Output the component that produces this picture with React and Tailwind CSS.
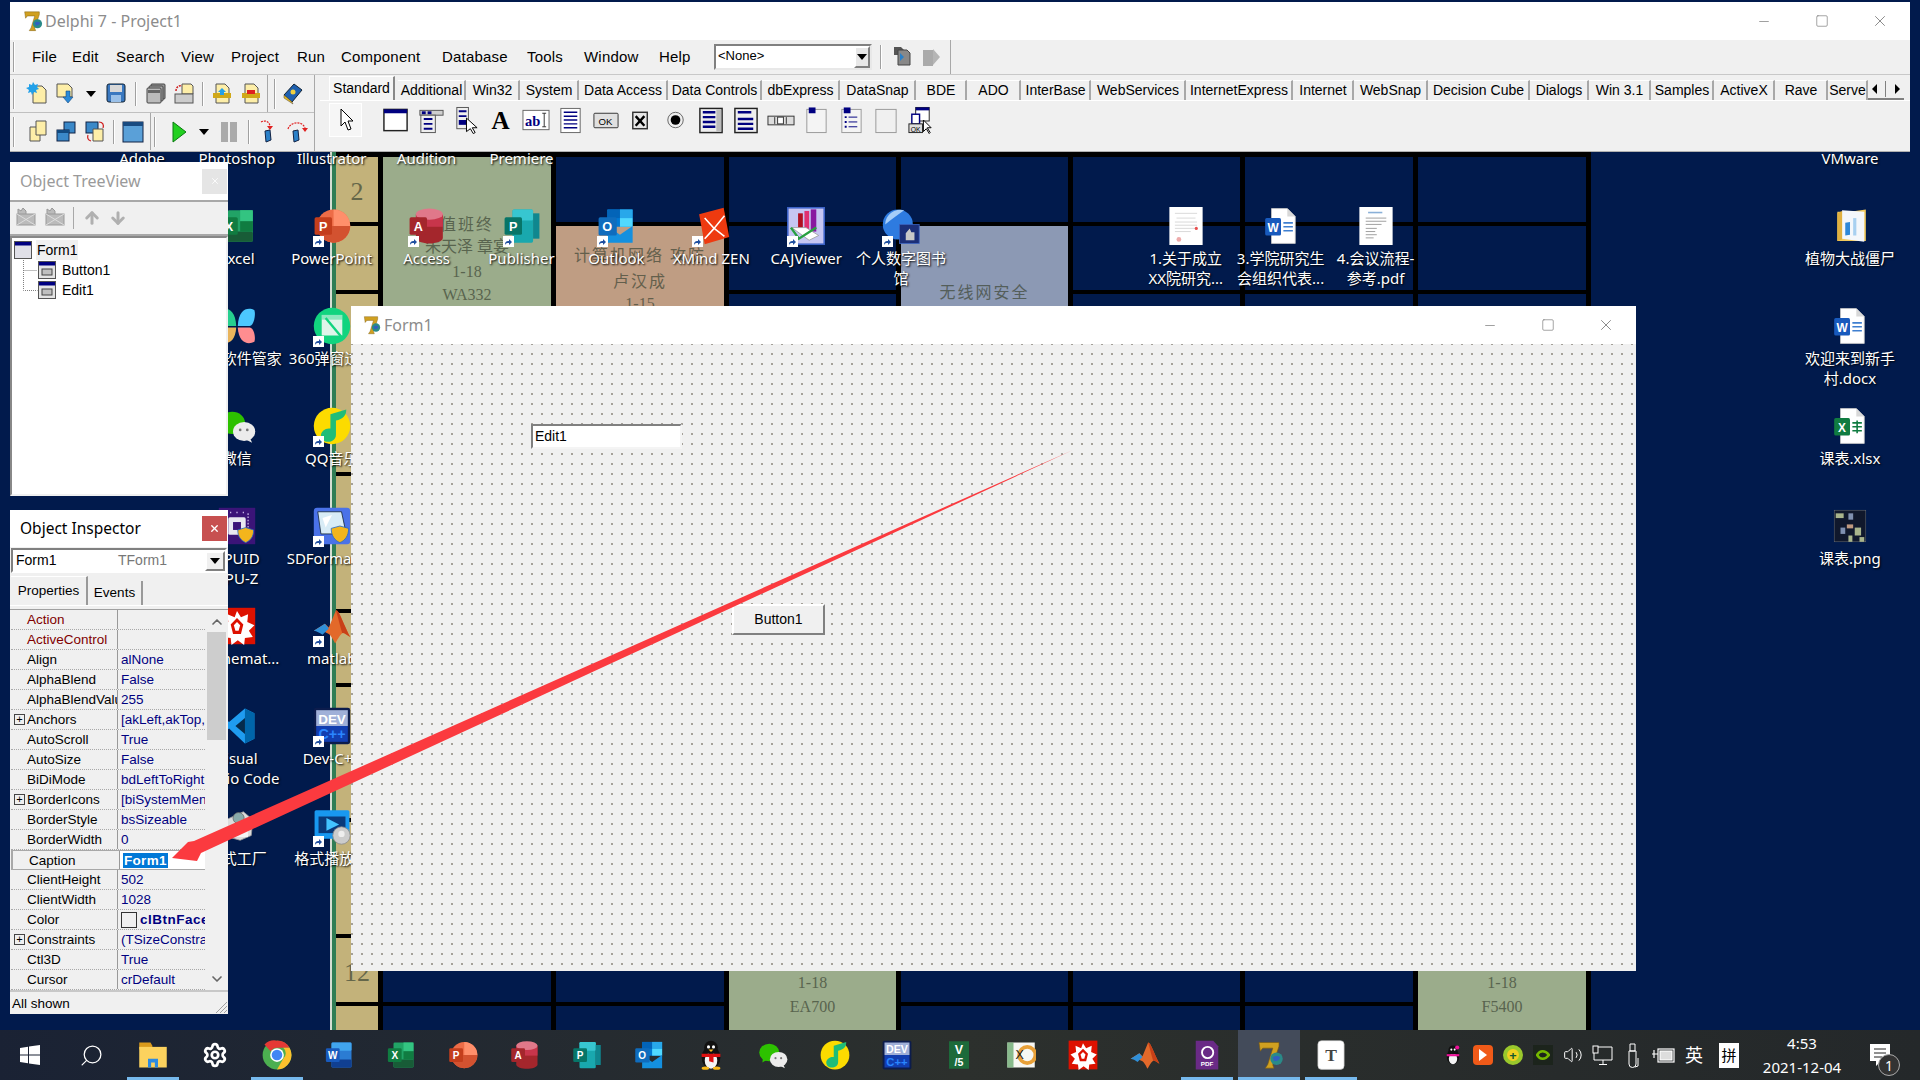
import React from "react";
import { Search, Settings, Volume2, ChevronUp, ChevronDown, X, Minus, Square, ArrowUp, ArrowDown } from "lucide-react";

const sansCjk = { fontFamily: '"Noto Sans", "Noto Sans CJK SC", sans-serif' };

// small helper for letters that sit on app tiles
const Letter = ({ x, y, size = 16, fill = "#fff", children, weight = 700 }) => (
  <text x={x} y={y} fontSize={size} fontWeight={weight} fill={fill} textAnchor="middle" fontFamily="Liberation Sans, sans-serif">
    {children}
  </text>
);

const Page = () => (
  <>
    <path d="M12 2h20l10 10v34H12z" fill="#fff" stroke="#c8c8c8" />
    <path d="M32 2v10h10z" fill="#d8d8d8" />
  </>
);

const art = {
  word: (
    <>
      <rect x="12" y="4" width="32" height="40" rx="2" fill="#2b7cd3" />
      <rect x="12" y="4" width="32" height="13" rx="2" fill="#41a5ee" />
      <rect x="12" y="31" width="32" height="13" rx="2" fill="#103f91" />
      <rect x="3" y="13" width="22" height="22" rx="2" fill="#185abd" />
      <Letter x={14} y={30}>W</Letter>
    </>
  ),
  excel: (
    <>
      <rect x="12" y="4" width="32" height="40" rx="2" fill="#21a366" />
      <rect x="28" y="4" width="16" height="14" fill="#33c481" />
      <rect x="12" y="31" width="32" height="13" rx="2" fill="#185c37" />
      <rect x="28" y="18" width="16" height="13" fill="#107c41" />
      <rect x="3" y="13" width="22" height="22" rx="2" fill="#107c41" />
      <Letter x={14} y={30}>X</Letter>
    </>
  ),
  ppt: (
    <>
      <circle cx="26" cy="24" r="21" fill="#ed6c47" />
      <path d="M26 3a21 21 0 0 1 21 21H26z" fill="#ff8f6b" />
      <path d="M5 24h42a21 21 0 0 1-42 0z" fill="#d35230" />
      <rect x="2" y="13" width="22" height="22" rx="2" fill="#c43e1c" />
      <Letter x={13} y={30}>P</Letter>
    </>
  ),
  access: (
    <>
      <path d="M10 9v30c0 4 9 7 17 7s17-3 17-7V9z" fill="#a4262c" />
      <path d="M10 9v16h34V9z" fill="#c8354b" />
      <ellipse cx="27" cy="9" rx="17" ry="7" fill="#e0788a" />
      <rect x="2" y="13" width="22" height="22" rx="2" fill="#a4262c" />
      <Letter x={13} y={30}>A</Letter>
    </>
  ),
  publisher: (
    <>
      <rect x="12" y="3" width="26" height="42" rx="2" fill="#19a8ae" />
      <rect x="12" y="3" width="26" height="14" rx="2" fill="#37c6d0" />
      <rect x="38" y="8" width="8" height="32" fill="#0f878f" />
      <rect x="2" y="13" width="22" height="22" rx="2" fill="#077568" />
      <Letter x={13} y={30}>P</Letter>
    </>
  ),
  outlook: (
    <>
      <rect x="13" y="3" width="32" height="22" rx="1" fill="#0078d4" />
      <rect x="13" y="3" width="16" height="11" fill="#0364b8" />
      <rect x="29" y="3" width="16" height="11" fill="#28a8ea" />
      <rect x="29" y="14" width="16" height="11" fill="#50d9ff" />
      <path d="M13 24l16 11 16-11v21H13z" fill="#1490df" />
      <rect x="2" y="13" width="23" height="23" rx="2" fill="#0f6cbd" />
      <Letter x={13} y={30}>O</Letter>
    </>
  ),
  xmind: (
    <>
      <path d="M9 9l31-8 7 37-31 9z" fill="#ee3a10" />
      <path d="M16 14l12 13-12 13M41 11L28 27l13 10" fill="none" stroke="#fff" strokeWidth="2" />
    </>
  ),
  caj: (
    <>
      <rect x="1" y="1" width="46" height="46" fill="#c6c6f2" stroke="#3c62c6" strokeWidth="2" />
      <rect x="14" y="8" width="6" height="22" fill="#b01020" />
      <rect x="22" y="5" width="6" height="26" fill="#e03070" />
      <rect x="30" y="3" width="7" height="28" fill="#8818a0" />
      <path d="M6 26l18 0 16 10-12 6z" fill="#fff" stroke="#999" />
      <path d="M5 26l10 14 22-14" fill="none" stroke="#28a040" strokeWidth="3" />
    </>
  ),
  library: (
    <>
      <circle cx="20" cy="22" r="19" fill="#2e7be0" />
      <path d="M4 22a19 19 0 0 1 24-18c-6 4-14 10-24 18z" fill="#a5cdf8" />
      <rect x="22" y="22" width="25" height="24" fill="#1c2f78" stroke="#3a62c0" />
      <path d="M30 42v-9l5-6 2 5 4 0v10z" fill="#c8c8c8" />
    </>
  ),
  pdfdoc: (
    <>
      <rect x="3" width="42" height="48" fill="#fff" />
      <path d="M10 8h28M12 14h24M10 19h28M10 23h28M10 27h26M10 31h20" stroke="#d0d0d0" strokeWidth="1" />
      <circle cx="37" cy="27" r="2" fill="#e85050" />
      <circle cx="15" cy="41" r="3" fill="#eaa" />
    </>
  ),
  pdfdoc2: (
    <>
      <rect x="3" width="42" height="48" fill="#fff" />
      <path d="M14 7h18" stroke="#8ab0d8" strokeWidth="2" />
      <path d="M11 14h26M11 18h26M11 22h20M11 27h14M11 31h12M11 35h14M11 39h10" stroke="#888" strokeWidth="1" />
    </>
  ),
  worddoc: (
    <>
      <Page />
      <rect x="4" y="14" width="20" height="22" rx="2" fill="#185abd" />
      <Letter x={14} y={31} size={15}>W</Letter>
      <path d="M27 20h12M27 25h12M27 30h12" stroke="#3f7fd0" strokeWidth="2" />
    </>
  ),
  exceldoc: (
    <>
      <Page />
      <rect x="4" y="14" width="20" height="22" rx="2" fill="#107c41" />
      <Letter x={14} y={31} size={15}>X</Letter>
      <path d="M27 20h12M27 25h12M27 30h12M33 17v16" stroke="#107c41" strokeWidth="2" />
    </>
  ),
  folder: (
    <>
      <path d="M8 6h16l20-3v40H8z" fill="#f1c95c" />
      <path d="M14 4l28 2v38l-28-4z" fill="#f4f7fb" />
      <path d="M18 20l6-1v16l-6 1z" fill="#2f88d8" />
      <rect x="28" y="14" width="4" height="22" fill="#a8d0f0" />
      <path d="M8 43V8l6-3v36z" fill="#e0b040" />
    </>
  ),
  png: (
    <>
      <rect x="4" y="4" width="40" height="40" fill="#10182c" stroke="#888" strokeWidth="0.5" />
      <rect x="6" y="8" width="10" height="6" fill="#a8b48c" />
      <rect x="22" y="8" width="6" height="8" fill="#7f90b0" />
      <rect x="20" y="22" width="8" height="5" fill="#c09a80" />
      <rect x="12" y="26" width="6" height="8" fill="#7f90b0" />
      <rect x="30" y="26" width="8" height="10" fill="#a8b48c" />
      <rect x="22" y="36" width="5" height="8" fill="#a8b48c" />
      <rect x="36" y="38" width="6" height="6" fill="#a8b48c" />
    </>
  ),
  guanjia: (
    <>
      <path d="M2 4c8-4 20-2 21 20H8C3 24 0 10 2 4z" fill="#27cf8f" />
      <path d="M46 4c-8-4-20-2-21 20h15c5 0 8-14 6-20z" fill="#4cc8ff" />
      <path d="M2 44c8 4 20 2 21-18H8C3 26 0 38 2 44z" fill="#e9b45c" />
      <path d="M46 44c-8 4-20 2-21-18h15c5 0 8 12 6 18z" fill="#ff8d90" />
    </>
  ),
  w360: (
    <>
      <circle cx="24" cy="24" r="23" fill="#11d47f" />
      <rect x="11" y="10" width="26" height="26" fill="#dff5ea" />
      <rect x="11" y="10" width="26" height="6" fill="#11d47f" opacity=".4" />
      <path d="M16 14l20 24" stroke="#11d47f" strokeWidth="3" />
    </>
  ),
  wechat: (
    <>
      <ellipse cx="18" cy="20" rx="16" ry="14" fill="#2dc100" />
      <path d="M8 28l-1 8 8-5z" fill="#2dc100" />
      <ellipse cx="33" cy="31" rx="14" ry="12" fill="#ececec" />
      <path d="M40 38l3 7-8-4z" fill="#ececec" />
      <circle cx="28" cy="29" r="1.7" fill="#777" />
      <circle cx="37" cy="29" r="1.7" fill="#777" />
    </>
  ),
  qqmusic: (
    <>
      <circle cx="24" cy="24" r="23" fill="#fcdb00" />
      <path d="M22 9l20-6c0 8-4 12-13 14l0 18c0 6-5 9-10 9s-9-3-9-8 5-9 10-9c1 0 2 0 2 0z" fill="#1fbd78" />
    </>
  ),
  cpuz: (
    <>
      <rect x="1" y="1" width="46" height="46" fill="#3b1478" />
      <rect x="13" y="13" width="22" height="22" rx="2" fill="#e8e8f0" />
      <rect x="19" y="19" width="10" height="10" fill="#3b1478" />
      <path d="M10 8v32M16 6v4M24 6v4M32 6v4M38 8v32" stroke="#d0c0f0" strokeWidth="1.5" strokeDasharray="2 2" />
      <path d="M35 26l10 3c0 9-4 13-10 16-6-3-10-7-10-16z" fill="#f3b51c" stroke="#1c66c8" />
    </>
  ),
  sd: (
    <>
      <rect x="1" y="1" width="46" height="46" rx="4" fill="#4a72e8" />
      <path d="M6 6h30l6 28H10z" fill="#d8ecf6" stroke="#123" />
      <path d="M12 14l12-4-8 16z" fill="#fff" />
      <path d="M34 24l11 3c0 9-4 15-11 18-7-3-11-9-11-18z" fill="#f3b51c" stroke="#1c66c8" />
    </>
  ),
  wolfram: (
    <>
      <rect x="1" y="1" width="46" height="46" fill="#dd1100" />
      <path d="M24 5l5 8 9-4-1 10 9 4-7 7 5 8-10 1-1 9-8-6-8 6-1-9-10-1 5-8-7-7 9-4-1-10 9 4z" fill="#fff" />
      <path d="M24 14l8 8-3 12H19l-3-12z" fill="#dd1100" />
      <path d="M24 19l4 4-2 7h-4l-2-7z" fill="#fff" />
    </>
  ),
  matlab: (
    <>
      <path d="M1 30l14-9 5 5 9-22c4 0 8 14 18 34-5-3-8-6-10-5-4 3-7 10-9 13-3-6-6-12-10-13-6-4-12-2-17-3z" fill="#e3692a" />
      <path d="M1 30l14-9 5 6-8 8c-4-3-7-4-11-5z" fill="#2f8fd8" />
      <path d="M29 4c4 0 8 14 18 34-5-3-8-6-10-5-3-9-5-19-8-29z" fill="#c84018" />
    </>
  ),
  vscode: (
    <>
      <path d="M34 2l12 6v32l-12 6L14 27l-8 6-4-3 8-7-8-7 4-3 8 6z" fill="#1f9cf0" />
      <path d="M34 2l12 6v32l-12 6z" fill="#0065a9" />
      <path d="M34 14v20l-12-10z" fill="#01182e" opacity=".85" />
    </>
  ),
  dev: (
    <>
      <rect x="1" y="1" width="46" height="46" rx="3" fill="#0c1c4c" />
      <rect x="4" y="4" width="40" height="20" fill="#a0b0d8" />
      <Letter x={24} y={21} size={17}>DEV</Letter>
      <rect x="4" y="24" width="40" height="20" fill="#123eb0" />
      <Letter x={24} y={41} size={18} fill="#2a86ff">C++</Letter>
    </>
  ),
  factory: (
    <>
      <path d="M6 18l26-12 12 10-2 20-14 6-22-6z" fill="#dcdcdc" stroke="#999" />
      <circle cx="26" cy="14" r="7" fill="#8aa" stroke="#666" />
      <rect x="8" y="30" width="30" height="8" fill="#f4f4f4" />
    </>
  ),
  player: (
    <>
      <rect x="2" y="4" width="44" height="36" rx="2" fill="#1898f0" />
      <rect x="7" y="12" width="34" height="21" fill="#0a3a7a" />
      <path d="M17 14l16 8-16 8z" fill="#43c4ff" />
      <circle cx="36" cy="36" r="11" fill="#ccc" stroke="#888" />
      <circle cx="36" cy="34" r="4" fill="#eee" />
    </>
  ),
  qq: (
    <>
      <ellipse cx="24" cy="28" rx="15" ry="18" fill="#111" />
      <ellipse cx="24" cy="33" rx="10" ry="13" fill="#f4f4f4" />
      <circle cx="24" cy="12" r="11" fill="#111" />
      <circle cx="20" cy="11" r="2.5" fill="#fff" />
      <circle cx="28" cy="11" r="2.5" fill="#fff" />
      <path d="M20 15h8l-4 4z" fill="#f8b818" />
      <path d="M9 22h30v5H28v9l-7-2v-7H9z" fill="#dd1010" />
      <ellipse cx="15" cy="45" rx="6" ry="2.5" fill="#f8b818" />
      <ellipse cx="33" cy="45" rx="6" ry="2.5" fill="#f8b818" />
    </>
  ),
  qqpink: (
    <>
      <ellipse cx="24" cy="28" rx="15" ry="18" fill="#111" />
      <ellipse cx="24" cy="33" rx="10" ry="13" fill="#f4f4f4" />
      <circle cx="24" cy="12" r="11" fill="#111" />
      <circle cx="20" cy="11" r="2.5" fill="#fff" />
      <circle cx="28" cy="11" r="2.5" fill="#fff" />
      <path d="M9 22h30v5H9z" fill="#ee1098" />
      <circle cx="34" cy="6" r="5" fill="#ee1098" />
    </>
  ),
  chrome: (
    <>
      <circle cx="24" cy="24" r="23" fill="#4caf50" />
      <path d="M24 1a23 23 0 0 1 20 11.500H24a11.500 11.500 0 0 0-10 6L4 7a23 23 0 0 1 20-6z" fill="#e53935" />
      <path d="M44 12.500A23 23 0 0 1 24 47l10-17a11.500 11.500 0 0 0 0-17.500z" fill="#fbc02d" />
      <circle cx="24" cy="24" r="11" fill="#fff" />
      <circle cx="24" cy="24" r="8.500" fill="#4285f4" />
    </>
  ),
  explorer: (
    <>
      <path d="M2 4h18l3 5v6H2z" fill="#d99a1c" />
      <rect x="2" y="11" width="44" height="33" fill="#fcd25e" />
      <path d="M16 44V30h16v14h-5v-8h-6v8z" fill="#2c8ae0" />
    </>
  ),
  greenv: (
    <>
      <path d="M8 2h32v44H8z" fill="#1c6a3a" />
      <Letter x={24} y={23} size={20}>V</Letter>
      <Letter x={24} y={42} size={17}>/5</Letter>
    </>
  ),
  hxd: (
    <>
      <rect x="2" y="4" width="44" height="40" fill="#f7f7f4" />
      <rect x="2" y="4" width="10" height="40" fill="#58a060" opacity=".7" />
      <circle cx="34" cy="24" r="13" fill="none" stroke="#e8a038" strokeWidth="6" />
      <Letter x={22} y={31} size={20} fill="#222" weight={400}>X</Letter>
    </>
  ),
  pdfp: (
    <>
      <path d="M6 1h28l8 9v37H6z" fill="#6a2a86" />
      <circle cx="25" cy="20" r="9" fill="none" stroke="#fff" strokeWidth="3" />
      <Letter x={24} y={42} size={10}>PDF</Letter>
    </>
  ),
  typora: (
    <>
      <rect x="3" y="1" width="42" height="46" rx="6" fill="#fff" stroke="#bbb" />
      <text x="24" y="34" fontSize="28" fontWeight="700" fill="#444" textAnchor="middle" fontFamily="Liberation Serif, serif">T</text>
    </>
  ),
  delphi: (
    <>
      <path d="M8 4h32v6L30 40l2 5H18l4-6 8-26H14l-4 5z" fill="#d0a020" stroke="#7a5a10" strokeWidth="1" />
      <circle cx="36" cy="30" r="10" fill="#2a8a88" />
      <path d="M30 28c4-3 9-3 12 0-2 5-7 7-10 5z" fill="#3060c0" />
    </>
  ),
};

const AppIcon = ({ kind, size = 38, className = "" }) => (
  <svg width={size} height={size} viewBox="0 0 48 48" className={className}>
    {art[kind]}
  </svg>
);

const ShortcutBadge = () => (
  <span className="absolute left-0 bottom-[-2px] flex h-[11px] w-[11px] items-center justify-center bg-white">
    <svg width="9" height="9" viewBox="0 0 9 9">
      <path d="M1 8c0-3 1-4 4-4V2l3 3-3 3V6C3 6 2 6 1 8z" fill="#1f4fa0" />
    </svg>
  </span>
);

const desktopIcons = [
  { pos: "col-start-1 row-start-1", label: ["Adobe"] },
  { pos: "col-start-2 row-start-1", label: ["Photoshop"] },
  { pos: "col-start-3 row-start-1", label: ["Illustrator"] },
  { pos: "col-start-4 row-start-1", label: ["Audition"] },
  { pos: "col-start-5 row-start-1", label: ["Premiere"] },
  { pos: "col-start-19 row-start-1", label: ["VMware"] },
  { pos: "col-start-2 row-start-2", kind: "excel", label: ["Excel"] },
  { pos: "col-start-3 row-start-2", kind: "ppt", label: ["PowerPoint"], link: true },
  { pos: "col-start-4 row-start-2", kind: "access", label: ["Access"], link: true },
  { pos: "col-start-5 row-start-2", kind: "publisher", label: ["Publisher"], link: true },
  { pos: "col-start-6 row-start-2", kind: "outlook", label: ["Outlook"], link: true },
  { pos: "col-start-7 row-start-2", kind: "xmind", label: ["XMind ZEN"], link: true },
  { pos: "col-start-8 row-start-2", kind: "caj", label: ["CAJViewer"], link: true },
  { pos: "col-start-9 row-start-2", kind: "library", label: ["个人数字图书", "馆"], link: true },
  { pos: "col-start-12 row-start-2", kind: "pdfdoc", label: ["1.关于成立", "XX院研究..."] },
  { pos: "col-start-13 row-start-2", kind: "worddoc", label: ["3.学院研究生", "会组织代表..."] },
  { pos: "col-start-14 row-start-2", kind: "pdfdoc2", label: ["4.会议流程-", "参考.pdf"] },
  { pos: "col-start-19 row-start-2", kind: "folder", label: ["植物大战僵尸"] },
  { pos: "col-start-2 row-start-3", kind: "guanjia", label: ["腾讯软件管家"] },
  { pos: "col-start-3 row-start-3", kind: "w360", label: ["360弹窗过滤"], link: true },
  { pos: "col-start-19 row-start-3", kind: "worddoc", label: ["欢迎来到新手", "村.docx"] },
  { pos: "col-start-2 row-start-4", kind: "wechat", label: ["微信"] },
  { pos: "col-start-3 row-start-4", kind: "qqmusic", label: ["QQ音乐"], link: true },
  { pos: "col-start-19 row-start-4", kind: "exceldoc", label: ["课表.xlsx"] },
  { pos: "col-start-2 row-start-5", kind: "cpuz", label: ["CPUID", "CPU-Z"] },
  { pos: "col-start-3 row-start-5", kind: "sd", label: ["SDFormatter"], link: true },
  { pos: "col-start-19 row-start-5", kind: "png", label: ["课表.png"] },
  { pos: "col-start-2 row-start-6", kind: "wolfram", label: ["Mathemat..."] },
  { pos: "col-start-3 row-start-6", kind: "matlab", label: ["matlab"], link: true },
  { pos: "col-start-2 row-start-7", kind: "vscode", label: ["Visual", "Studio Code"] },
  { pos: "col-start-3 row-start-7", kind: "dev", label: ["Dev-C++"], link: true },
  { pos: "col-start-2 row-start-8", kind: "factory", label: ["格式工厂"] },
  { pos: "col-start-3 row-start-8", kind: "player", label: ["格式播放器"], link: true },
];

const DesktopIcon = ({ pos, kind, label, link }) => (
  <div className={`${pos} flex flex-col items-center`} style={sansCjk}>
    <div className="relative h-[38px] w-[38px]">
      {kind && <AppIcon kind={kind} />}
      {link && <ShortcutBadge />}
    </div>
    <div className="mt-[3px] whitespace-nowrap text-center text-[15px] leading-[20px] text-white [text-shadow:1px_1px_2px_#000]">
      {label.map((l) => (
        <div key={l}>{l}</div>
      ))}
    </div>
  </div>
);

// one column of the timetable wallpaper
const navy = "bg-[#011a4c]";
const rows = ["h-[65px]", "h-[65px]", "h-[178px]", "h-[134px]", "h-[70px]", "h-[132px]", "h-[113px]", "h-[64px]", "h-[24px]"];
const plainRows = (from, to) => rows.slice(from, to).map((h, i) => <div key={h + i} className={`${h} ${navy}`} />);

const SerifText = ({ className, children }) => (
  <div className={`text-center leading-none text-[#3d4635] opacity-70 ${className}`} style={{ fontFamily: '"Liberation Serif", "Noto Sans CJK SC", serif' }}>
    {children}
  </div>
);

const Wallpaper = () => (
  <div className="absolute left-[330px] top-[150px] flex h-[880px] gap-[5px] overflow-hidden bg-black pr-[5px] pt-[7px]">
    <div className="flex">
      <div className="-mt-[7px] h-[887px] w-[6px] border-l-2 border-[#d5ddd2] bg-[#2f7d55]" />
      <div className="flex w-[42px] flex-col gap-[4px]">
        {rows.map((h, i) => (
          <div key={h + i} className={`${h} bg-[#c3b27a] text-[26px] text-[#4b442c]`}>
            {i === 0 && <SerifText className="pt-[22px]">2</SerifText>}
            {i === 7 && <SerifText className="pt-[22px]">12</SerifText>}
          </div>
        ))}
      </div>
    </div>
    <div className="flex w-[168px] flex-col gap-[4px]">
      <div className="h-[316px] bg-[#9bac8b]">
        <SerifText className="pt-[60px] text-[16px] tracking-[2px]">值班终</SerifText>
        <SerifText className="pt-[6px] text-[16px]">朱天泽 章宴</SerifText>
        <SerifText className="pt-[9px] text-[16px]">1-18</SerifText>
        <SerifText className="pt-[7px] text-[16px]">WA332</SerifText>
      </div>
      {plainRows(3, 9)}
    </div>
    <div className="flex w-[168px] flex-col gap-[4px]">
      {plainRows(0, 1)}
      <div className="h-[247px] bg-[#bf9d83]">
        <SerifText className="pt-[22px] text-[16px] tracking-[2px]">计算机网络 攻防</SerifText>
        <SerifText className="pt-[10px] text-[16px] tracking-[2px]">卢汉成</SerifText>
        <SerifText className="pt-[6px] text-[16px]">1-15</SerifText>
      </div>
      {plainRows(3, 9)}
    </div>
    <div className="flex w-[167px] flex-col gap-[4px]">
      {plainRows(0, 7)}
      <div className="h-[92px] bg-[#9bac8b]">
        <SerifText className="pt-[37px] text-[16px]">1-18</SerifText>
        <SerifText className="pt-[8px] text-[16px]">EA700</SerifText>
      </div>
    </div>
    <div className="flex w-[167px] flex-col gap-[4px]">
      {plainRows(0, 1)}
      <div className="h-[247px] bg-[#8c99b4]">
        <SerifText className="pt-[59px] text-[16px] tracking-[2px]">无线网安全</SerifText>
      </div>
      {plainRows(3, 9)}
    </div>
    <div className="flex w-[167px] flex-col gap-[4px]">{plainRows(0, 9)}</div>
    <div className="flex w-[168px] flex-col gap-[4px]">{plainRows(0, 9)}</div>
    <div className="flex w-[168px] flex-col gap-[4px]">
      {plainRows(0, 7)}
      <div className="h-[92px] bg-[#9bac8b]">
        <SerifText className="pt-[37px] text-[16px]">1-18</SerifText>
        <SerifText className="pt-[8px] text-[16px]">F5400</SerifText>
      </div>
    </div>
  </div>
);

const WinControls = ({ className }) => (
  <div className={`flex items-center text-[#666] ${className}`}>
    <Minus size={15} strokeWidth={1} className="w-[58px]" />
    <Square size={14} strokeWidth={1} className="w-[58px]" />
    <X size={18} strokeWidth={1} className="w-[58px]" />
  </div>
);

/* toolbar glyphs for the Delphi IDE */
const paper = "#fdeea8";
const ToolGlyph = ({ kind, gray }) => {
  const g = {
    newfile: (
      <>
        <path d="M7 5h9l4 4v13H7z" fill={paper} stroke="#555" />
        <path d="M3 3l3 1 1-3 2 3 3-1-1 3 2 2-3 1 1 3-3-1-2 3-1-3-3 1 1-3-3-2 3-1z" fill="#22a0e8" />
      </>
    ),
    open: (
      <>
        <path d="M3 3h11l4 4v9H3z" fill={paper} stroke="#555" />
        <path d="M12 10v6H9l5 6 5-6h-3v-6z" fill="#2a8ad8" stroke="#174a80" strokeWidth=".6" />
      </>
    ),
    save: (
      <>
        <rect x="3" y="3" width="18" height="18" rx="2" fill="#3a78c0" stroke="#123" />
        <rect x="6" y="4" width="12" height="7" fill="#d8d8d8" />
        <rect x="7" y="14" width="10" height="7" fill="#9ac0e8" />
      </>
    ),
    stack: (
      <>
        <rect x="7" y="3" width="14" height="15" rx="1" fill="#999" stroke="#444" />
        <rect x="5" y="5" width="14" height="15" rx="1" fill="#aaa" stroke="#444" />
        <rect x="3" y="7" width="14" height="15" rx="1" fill="#bbb" stroke="#444" />
        <rect x="4" y="9" width="12" height="3" fill="#666" />
      </>
    ),
    reopen: (
      <>
        <path d="M10 3h9l2 2v8H10z" fill={paper} stroke="#555" />
        <rect x="3" y="13" width="18" height="9" fill="#ccc" stroke="#555" />
        <path d="M4 10c0-4 3-6 6-5" fill="none" stroke="#d02020" strokeWidth="1.5" strokeDasharray="2 1" />
      </>
    ),
    addfile: (
      <>
        <path d="M6 3h9l4 4v15H6z" fill={paper} stroke="#555" />
        <rect x="3" y="12" width="18" height="5" fill="#d0a818" />
        <path d="M12 7l4 4h-8zM10 11h4v3h-4z" fill="#22a0e8" />
      </>
    ),
    removefile: (
      <>
        <path d="M6 3h9l4 4v15H6z" fill={paper} stroke="#555" />
        <rect x="3" y="12" width="18" height="5" fill="#d0a818" />
        <rect x="8" y="9" width="8" height="4" fill="#e02020" />
      </>
    ),
    help: (
      <>
        <path d="M3 14L13 3l8 6-10 12z" fill="#1e60b0" stroke="#123" />
        <path d="M3 14l8 7 1 2-9-6z" fill="#e8c020" stroke="#654" strokeWidth=".6" />
        <circle cx="12" cy="11" r="2.5" fill="#f0d040" />
      </>
    ),
    units: (
      <>
        <path d="M4 8h10v14H4z" fill={paper} stroke="#555" />
        <path d="M10 2h10v14H10z" fill={paper} stroke="#555" />
      </>
    ),
    forms: (
      <>
        <rect x="10" y="3" width="11" height="11" fill="#3a88c8" stroke="#124" />
        <rect x="3" y="11" width="12" height="11" fill="#3a88c8" stroke="#124" />
        <rect x="3" y="11" width="12" height="3" fill="#124a80" />
      </>
    ),
    toggle: (
      <>
        <rect x="3" y="3" width="12" height="11" fill="#3a88c8" stroke="#124" />
        <path d="M10 10h10v12H10z" fill={paper} stroke="#555" />
        <path d="M16 3c4 0 5 3 4 6M5 16c-1 3 0 5 3 6" fill="none" stroke="#d02020" strokeWidth="1.2" />
      </>
    ),
    newform: (
      <>
        <rect x="2" y="3" width="20" height="20" fill="#5aa0d8" stroke="#124" />
        <rect x="2" y="3" width="20" height="4" fill="#184a80" />
      </>
    ),
    play: <path d="M6 3l13 10-13 10z" fill="#22d020" stroke="#0a7a10" />,
    pause: (
      <>
        <rect x="4" y="3" width="7" height="20" fill="#aaa" />
        <rect x="13" y="3" width="7" height="20" fill="#aaa" />
      </>
    ),
    stepin: (
      <>
        <path d="M4 3c4-2 8-1 9 4" fill="none" stroke="#e02020" strokeWidth="1.2" strokeDasharray="2 1" />
        <path d="M10 7h6l-3 4z" fill="#e02020" />
        <path d="M8 12l5-1 1 10-5 2z" fill="#2a80c8" stroke="#124" />
      </>
    ),
    stepover: (
      <>
        <path d="M3 10c2-7 14-9 17-1" fill="none" stroke="#e02020" strokeWidth="1.2" strokeDasharray="2 1" />
        <path d="M17 9h6l-3 4z" fill="#e02020" />
        <path d="M8 12l5-1 1 10-5 2z" fill="#2a80c8" stroke="#124" />
      </>
    ),
    tree1: (
      <>
        <path d="M3 4l3 2 2-3 3 3v4H3z" fill="#bbb" stroke="#999" />
        <rect x="2" y="9" width="18" height="11" fill="#bbb" stroke="#999" />
        <path d="M2 9l18 11M2 20l18-11" stroke="#ddd" />
      </>
    ),
    compileA: (
      <>
        <path d="M4 3h7l3 3v5H4z" fill="#555" />
        <path d="M8 6h9l3 3v12H8z" fill="#888" stroke="#444" />
        <path d="M10 9l4 4-4 4z" fill="#2a80c8" />
      </>
    ),
    compileB: (
      <>
        <rect x="5" y="6" width="10" height="16" fill="#aaa" />
        <path d="M15 5l7 8-7 8z" fill="#b5b5b5" />
      </>
    ),
  }[kind];
  return (
    <svg width="24" height="26" viewBox="0 0 24 26" className={gray ? "opacity-70" : ""}>
      {g}
    </svg>
  );
};

const Tri = () => <span className="h-0 w-0 border-x-[5px] border-t-[6px] border-x-transparent border-t-black" />;
const Cell = ({ w, children }) => <div className={`flex items-center justify-center ${w}`}>{children}</div>;
const Sep = ({ w }) => (
  <div className={`flex items-center justify-center ${w}`}>
    <span className="h-[24px] w-[2px] border-l border-r border-l-[#a0a0a0] border-r-white" />
  </div>
);
const Grip = () => <span className="mr-[3px] ml-[3px] h-[30px] w-[2px] shrink-0 border-l border-r border-l-[#a0a0a0] border-r-white" />;

const menuItems = [
  ["File", "w-[40px]"],
  ["Edit", "w-[44px]"],
  ["Search", "w-[65px]"],
  ["View", "w-[50px]"],
  ["Project", "w-[66px]"],
  ["Run", "w-[44px]"],
  ["Component", "w-[101px]"],
  ["Database", "w-[85px]"],
  ["Tools", "w-[57px]"],
  ["Window", "w-[75px]"],
  ["Help", "w-[40px]"],
];

const tabs = [
  ["Additional", "w-[68px]"], ["Win32", "w-[54px]"], ["System", "w-[59px]"], ["Data Access", "w-[89px]"],
  ["Data Controls", "w-[94px]"], ["dbExpress", "w-[78px]"], ["DataSnap", "w-[76px]"], ["BDE", "w-[51px]"],
  ["ADO", "w-[54px]"], ["InterBase", "w-[70px]"], ["WebServices", "w-[95px]"], ["InternetExpress", "w-[107px]"],
  ["Internet", "w-[61px]"], ["WebSnap", "w-[74px]"], ["Decision Cube", "w-[102px]"], ["Dialogs", "w-[59px]"],
  ["Win 3.1", "w-[62px]"], ["Samples", "w-[63px]"], ["ActiveX", "w-[61px]"], ["Rave", "w-[53px]"], ["Serve", "w-[40px]"],
];

const PalGlyph = ({ kind }) => {
  const win = (
    <>
      <rect x="2" y="3" width="24" height="22" fill="#fff" stroke="#222" strokeWidth="1.500" />
      <rect x="2" y="3" width="24" height="4" fill="#000080" />
    </>
  );
  const g = {
    form: win,
    mainmenu: (
      <>
        <rect x="3" y="4" width="24" height="5" fill="#cfcfcf" stroke="#555" />
        <rect x="5" y="5" width="4" height="3" fill="#000080" />
        <rect x="11" y="5" width="4" height="3" fill="#000080" />
        <rect x="4" y="9" width="15" height="18" fill="#eee" stroke="#555" />
        <path d="M7 13h9M7 18h9M7 23h9" stroke="#000080" strokeWidth="2" />
      </>
    ),
    popup: (
      <>
        <rect x="5" y="1" width="12" height="22" fill="#eee" stroke="#555" />
        <path d="M7 5h8M7 10h8" stroke="#000080" strokeWidth="2" />
        <rect x="7" y="14" width="9" height="5" fill="#000080" />
        <path d="M15 12v14l4-3 3 5 2-1-3-5h5z" fill="#fff" stroke="#000" />
      </>
    ),
    label: <text x="14" y="23" fontSize="26" fontWeight="700" fontFamily="Liberation Serif, serif" textAnchor="middle">A</text>,
    edit: (
      <>
        <rect x="1" y="4" width="27" height="20" fill="#fff" stroke="#666" />
        <text x="11" y="20" fontSize="15" fontWeight="700" fill="#000080" fontFamily="Liberation Serif, serif" textAnchor="middle">ab</text>
        <path d="M23 7v14M21 7h4M21 21h4" stroke="#333" />
      </>
    ),
    memo: (
      <>
        <rect x="4" y="2" width="20" height="25" fill="#fff" stroke="#666" />
        <path d="M7 6h14M7 10h14M7 14h14M7 18h14M7 22h14" stroke="#000080" strokeWidth="1.500" />
      </>
    ),
    button: (
      <>
        <rect x="2" y="7" width="25" height="15" rx="1" fill="#e0e0e0" stroke="#333" />
        <text x="14" y="19" fontSize="10" fontFamily="Liberation Sans, sans-serif" textAnchor="middle">OK</text>
      </>
    ),
    check: (
      <>
        <rect x="6" y="6" width="15" height="17" fill="#e8e8e8" stroke="#333" strokeWidth="1.500" />
        <path d="M9 10l9 10M18 10l-9 10" stroke="#000" strokeWidth="2.500" />
      </>
    ),
    radio: (
      <>
        <circle cx="14" cy="14" r="8" fill="#eee" stroke="#666" />
        <circle cx="14" cy="14" r="5" fill="#000" />
      </>
    ),
    listbox: (
      <>
        <rect x="3" y="2" width="23" height="25" fill="#eee" stroke="#222" strokeWidth="1.500" />
        <path d="M6 6h13M6 11h13M6 16h13M6 21h13" stroke="#000080" strokeWidth="2.500" />
        <rect x="20" y="3" width="5" height="23" fill="#bbb" />
      </>
    ),
    combo: (
      <>
        <rect x="3" y="2" width="23" height="25" fill="#eee" stroke="#222" strokeWidth="1.500" />
        <path d="M6 6h14M6 13h16M6 18h16M6 23h16" stroke="#000080" strokeWidth="2.500" />
      </>
    ),
    scroll: (
      <>
        <rect x="1" y="10" width="27" height="9" fill="#ddd" stroke="#333" />
        <path d="M8 11v7M20 11v7" stroke="#333" />
        <rect x="11" y="11" width="6" height="7" fill="#fff" stroke="#333" />
      </>
    ),
    group: (
      <>
        <rect x="5" y="3" width="20" height="24" fill="#f4f4f4" stroke="#999" />
        <rect x="7" y="1" width="7" height="6" fill="#000080" />
      </>
    ),
    radiogroup: (
      <>
        <rect x="5" y="3" width="20" height="24" fill="#f4f4f4" stroke="#999" />
        <rect x="7" y="1" width="7" height="6" fill="#000080" />
        <path d="M12 11h9M12 16h9M12 21h9" stroke="#000080" />
        <path d="M8 11h2M8 16h2M8 21h2" stroke="#000080" strokeWidth="2" />
      </>
    ),
    panel: <rect x="4" y="3" width="21" height="24" fill="#f0f0f0" stroke="#999" />,
    actions: (
      <>
        <rect x="9" y="1" width="14" height="14" fill="#fff" stroke="#222" />
        <rect x="9" y="1" width="14" height="3" fill="#000080" />
        <rect x="5" y="8" width="8" height="10" fill="#fff" stroke="#000080" strokeWidth="1.500" />
        <rect x="2" y="18" width="14" height="9" fill="#ddd" stroke="#222" />
        <text x="9" y="26" fontSize="7" fontFamily="Liberation Sans, sans-serif" textAnchor="middle">OK</text>
        <path d="M17 14v12l3-3 3 5 1-1-3-5h4z" fill="#fff" stroke="#000" />
      </>
    ),
  }[kind];
  return (
    <svg width="28" height="29" viewBox="0 0 29 29">
      {g}
    </svg>
  );
};

const palette = ["form", "mainmenu", "popup", "label", "edit", "memo", "button", "check", "radio", "listbox", "combo", "scroll", "group", "radiogroup", "panel", "actions"];

const MainWindow = () => (
  <div className="absolute left-[10px] top-[2px] flex h-[150px] w-[1900px] flex-col border-b border-[#b0b0b0] bg-[#f0f0f0] font-['Liberation_Sans',sans-serif] text-[15px] text-black">
    <div className="flex h-[38px] shrink-0 items-center bg-white">
      <AppIcon kind="delphi" size={22} className="ml-[11px]" />
      <span className="ml-[2px] text-[16px] text-[#8c8c8c]" style={sansCjk}>Delphi 7 - Project1</span>
      <WinControls className="ml-auto mr-[1px]" />
    </div>
    <div className="flex h-[35px] shrink-0 border-b border-[#c8c8c8]">
      <div className="flex w-[940px] items-center">
        <Grip />
        <div className="ml-[14px] flex">
          {menuItems.map(([m, w]) => (
            <span key={m} className={`${w} tracking-[0.2px]`}>{m}</span>
          ))}
        </div>
        <div className="ml-[15px] flex h-[26px] w-[158px] border-2 border-t-[#808080] border-l-[#808080] border-r-[#e8e8e8] border-b-[#e8e8e8] bg-white">
          <span className="flex-1 pl-[2px] text-[13px] leading-[20px]">&lt;None&gt;</span>
          <span className="flex w-[16px] items-center justify-center border-2 border-t-white border-l-white border-r-[#808080] border-b-[#808080] bg-[#e8e8e8]">
            <Tri />
          </span>
        </div>
        <Sep w="w-[18px]" />
        <ToolGlyph kind="compileA" />
        <span className="w-[4px]" />
        <ToolGlyph kind="compileB" />
      </div>
      <span className="h-[34px] border-r border-[#a8a8a8]" />
    </div>
    <div className="flex flex-1">
      <div className="flex w-[304px] flex-col">
        <div className="flex h-[38px] border-b border-[#c0c0c0]">
          <div className="flex w-[258px] items-center border-r border-[#a8a8a8]">
            <Grip />
            <span className="w-[6px]" />
            <Cell w="w-[28px]"><ToolGlyph kind="newfile" /></Cell>
            <Cell w="w-[28px]"><ToolGlyph kind="open" /></Cell>
            <Cell w="w-[22px]"><Tri /></Cell>
            <Cell w="w-[28px]"><ToolGlyph kind="save" /></Cell>
            <Sep w="w-[12px]" />
            <Cell w="w-[28px]"><ToolGlyph kind="stack" /></Cell>
            <Cell w="w-[28px]"><ToolGlyph kind="reopen" /></Cell>
            <Sep w="w-[10px]" />
            <Cell w="w-[28px]"><ToolGlyph kind="addfile" /></Cell>
            <Cell w="w-[29px]"><ToolGlyph kind="removefile" /></Cell>
          </div>
          <div className="flex items-center pl-[3px]">
            <Grip />
            <Cell w="w-[28px]"><ToolGlyph kind="help" /></Cell>
          </div>
        </div>
        <div className="flex h-[37px]">
          <div className="flex w-[141px] items-center border-r border-[#a8a8a8]">
            <Grip />
            <span className="w-[6px]" />
            <Cell w="w-[28px]"><ToolGlyph kind="units" /></Cell>
            <Cell w="w-[28px]"><ToolGlyph kind="forms" /></Cell>
            <Cell w="w-[29px]"><ToolGlyph kind="toggle" /></Cell>
            <Sep w="w-[10px]" />
            <Cell w="w-[28px]"><ToolGlyph kind="newform" /></Cell>
          </div>
          <div className="flex items-center">
            <Grip />
            <span className="w-[6px]" />
            <Cell w="w-[28px]"><ToolGlyph kind="play" /></Cell>
            <Cell w="w-[22px]"><Tri /></Cell>
            <Cell w="w-[28px]"><ToolGlyph kind="pause" /></Cell>
            <Sep w="w-[12px]" />
            <Cell w="w-[28px]"><ToolGlyph kind="stepin" /></Cell>
            <Cell w="w-[28px]"><ToolGlyph kind="stepover" /></Cell>
          </div>
        </div>
      </div>
      <div className="flex flex-1 flex-col border-l border-[#a8a8a8] pl-[5px]">
        <div className="relative mt-[3px] flex h-[22px] items-end text-[14px]">
          <span className="mr-[3px] ml-[9px] flex h-[24px] w-[66px] items-center justify-center border-t border-l border-r-2 border-t-white border-l-white border-r-[#888] bg-[#f4f4f4]">
            Standard
          </span>
          {tabs.map(([t, w]) => (
            <span key={t} className={`${w} flex h-[20px] shrink-0 items-center justify-center overflow-hidden whitespace-nowrap border-r-2 border-t border-t-white border-r-[#a8a8a8] pl-[1px] text-[14px]`}>
              {t}
            </span>
          ))}
          <span className="flex h-[20px] w-[36px] items-center justify-around border-b-2 border-[#808080] bg-[#f0f0f0]">
            <span className="h-0 w-0 border-y-[5px] border-r-[5px] border-y-transparent border-r-black" />
            <span className="h-[16px] w-px bg-[#808080]" />
            <span className="h-0 w-0 border-y-[5px] border-l-[5px] border-y-transparent border-l-black" />
          </span>
        </div>
        <div className="flex-1 border-t border-white pt-[2px]">
          <div className="flex h-[34px] items-center">
            <span className="ml-[9px] flex h-[34px] w-[33px] items-center justify-center border border-white bg-[#f6f6f6]">
              <svg width="22" height="28" viewBox="0 0 22 28">
                <path d="M6 3v17l4-4 3 8 3-1-3-8h5z" fill="#fff" stroke="#000" />
              </svg>
            </span>
            <span className="w-[16px]" />
            {palette.map((p) => (
              <Cell key={p} w="w-[35px]"><PalGlyph kind={p} /></Cell>
            ))}
          </div>
        </div>
      </div>
    </div>
  </div>
);

const TreeGlyph = ({ plain }) => (
  <svg width="18" height="18" viewBox="0 0 18 18">
    <rect x=".5" y=".5" width="17" height="17" fill={plain ? "#e0e0e8" : "#e4e4e4"} stroke="#555" />
    <rect x="1" y="1" width="16" height="3.500" fill="#000080" />
    {!plain && <rect x="4" y="8" width="10" height="6" fill="#c0c0c0" stroke="#444" />}
  </svg>
);

const TreeLine = ({ last }) => (
  <svg width="15" height="20" viewBox="0 0 15 20" className="shrink-0">
    <path d={last ? "M.5 0v10.500h14" : "M.5 0v20M.5 10.500h14"} fill="none" stroke="#808080" strokeDasharray="1 1" />
  </svg>
);

const ObjectTree = () => (
  <div className="absolute left-[10px] top-[162px] flex h-[334px] w-[218px] flex-col bg-white font-['Liberation_Sans',sans-serif]">
    <div className="flex h-[38px] items-center justify-between">
      <span className="ml-[10px] text-[16px] text-[#9a9a9a]" style={sansCjk}>Object TreeView</span>
      <span className="mr-[1px] flex h-[25px] w-[25px] items-center justify-center bg-[#e5e5e5] text-white">
        <X size={10} strokeWidth={2} />
      </span>
    </div>
    <div className="flex h-[36px] items-center border-t-2 border-b-2 border-t-[#a8a8a8] border-b-[#a8a8a8] bg-[#f0f0f0] pl-[5px] text-[#b0b0b0]">
      <ToolGlyph kind="tree1" />
      <span className="w-[5px]" />
      <ToolGlyph kind="tree1" />
      <span className="mx-[5px] h-[22px] w-px bg-[#a8a8a8]" />
      <ArrowUp size={18} strokeWidth={4} className="mx-[4px]" />
      <ArrowDown size={18} strokeWidth={4} className="mx-[4px]" />
    </div>
    <div className="flex-1 border-2 border-l-[#888] border-t-[#888] border-r-[#f0f0f0] border-b-[#f0f0f0] pl-[2px] pt-[2px] text-[14px]">
      <div className="flex h-[20px] items-center">
        <TreeGlyph plain />
        <span className="ml-[4px] bg-[#f0f0f0] px-[1px] leading-[20px]">Form1</span>
      </div>
      <div className="ml-[9px] flex h-[20px] items-center">
        <TreeLine />
        <TreeGlyph />
        <span className="ml-[6px]">Button1</span>
      </div>
      <div className="ml-[9px] flex h-[20px] items-center">
        <TreeLine last />
        <TreeGlyph />
        <span className="ml-[6px]">Edit1</span>
      </div>
    </div>
  </div>
);

const props = [
  { n: "Action", red: true },
  { n: "ActiveControl", red: true },
  { n: "Align", v: "alNone" },
  { n: "AlphaBlend", v: "False" },
  { n: "AlphaBlendValue", v: "255" },
  { n: "Anchors", v: "[akLeft,akTop,akRight]", plus: true },
  { n: "AutoScroll", v: "True" },
  { n: "AutoSize", v: "False" },
  { n: "BiDiMode", v: "bdLeftToRight" },
  { n: "BorderIcons", v: "[biSystemMenu,biMinimize]", plus: true },
  { n: "BorderStyle", v: "bsSizeable" },
  { n: "BorderWidth", v: "0" },
  { n: "Caption", v: "Form1", active: true },
  { n: "ClientHeight", v: "502" },
  { n: "ClientWidth", v: "1028" },
  { n: "Color", v: "clBtnFace", swatch: true },
  { n: "Constraints", v: "(TSizeConstraints)", plus: true },
  { n: "Ctl3D", v: "True" },
  { n: "Cursor", v: "crDefault" },
];

const PropRow = ({ n, v, red, plus, active, swatch }) => (
  <div className={`flex h-[20px] items-center border-b border-dotted border-[#a8a8a8] ${active ? "border-t border-l-2 border-[#777] border-solid" : ""}`}>
    <div className="relative h-full w-[107px] shrink-0 overflow-hidden whitespace-nowrap border-r border-[#999] pl-[16px] leading-[19px]">
      {plus && (
        <span className="absolute left-[3px] top-[4px] flex h-[11px] w-[11px] items-center justify-center border border-[#444] text-[11px] leading-none">
          +
        </span>
      )}
      <span className={red ? "text-[#800000]" : "text-black"}>{n}</span>
    </div>
    <div className={`h-full flex-1 overflow-hidden whitespace-nowrap pl-[3px] leading-[19px] text-[#000080] ${active ? "bg-white" : ""}`}>
      {active && <span className="bg-[#0078d7] px-[1px] font-bold tracking-[0.3px] text-white">{v}</span>}
      {swatch && (
        <span className="flex items-center">
          <span className="mr-[3px] h-[16px] w-[16px] shrink-0 border border-[#333] bg-[#f0f0f0]" />
          <span className="font-bold tracking-[0.5px]">{v}</span>
        </span>
      )}
      {!active && !swatch && v}
    </div>
  </div>
);

const ObjectInspector = () => (
  <div className="absolute left-[10px] top-[510px] flex h-[504px] w-[218px] flex-col bg-[#f0f0f0] font-['Liberation_Sans',sans-serif] text-[13.500px]">
    <div className="flex h-[37px] shrink-0 items-center justify-between bg-white">
      <span className="ml-[10px] text-[15.500px] text-black" style={sansCjk}>Object Inspector</span>
      <span className="mr-[1px] flex h-[25px] w-[25px] items-center justify-center bg-[#c75050] text-white">
        <X size={11} strokeWidth={3} />
      </span>
    </div>
    <div className="mx-[1px] mt-[1px] flex h-[25px] shrink-0 items-center border-2 border-t-[#808080] border-l-[#808080] border-r-white border-b-white bg-white">
      <span className="w-[105px] pl-[3px] text-[14px]">Form1</span>
      <span className="flex-1 text-[14px] text-[#777]">TForm1</span>
      <span className="flex h-[20px] w-[20px] items-center justify-center border-2 border-t-white border-l-white border-r-[#808080] border-b-[#808080] bg-[#f0f0f0]">
        <Tri />
      </span>
    </div>
    <div className="mt-[2px] flex h-[31px] shrink-0 items-end border-b border-white pl-[1px]">
      <span className="flex h-[29px] w-[77px] items-center justify-center border-r-2 border-[#999] border-t border-t-white bg-[#f0f0f0] text-[13.500px]">Properties</span>
      <span className="flex h-[24px] w-[55px] items-center justify-center border-r-2 border-[#999] text-[13.500px]">Events</span>
    </div>
    <div className="mt-[3px] flex h-[381px] shrink-0 border-t border-[#a0a0a0]">
      <div className="w-[195px] shrink-0 pl-[1px]">
        {props.map((p) => (
          <PropRow key={p.n} {...p} />
        ))}
      </div>
      <div className="flex flex-1 flex-col items-center">
        <ChevronUp size={16} strokeWidth={2.500} className="mt-[4px] text-[#666]" />
        <span className="mt-[2px] h-[108px] w-[19px] bg-[#cdcdcd]" />
        <ChevronDown size={16} strokeWidth={2.500} className="mt-auto mb-[3px] text-[#666]" />
      </div>
    </div>
    <div className="relative flex h-[24px] items-center border-t-2 border-[#c8c8c8] pl-[2px] pt-[2px]">
      All shown
      <svg width="14" height="14" viewBox="0 0 14 14" className="absolute bottom-0 right-0">
        <path d="M13 2L2 13M13 6l-7 7M13 10l-3 3" stroke="#a0a0a0" />
      </svg>
    </div>
  </div>
);

const FormWindow = () => (
  <div className="absolute left-[351px] top-[306px] flex h-[665px] w-[1285px] flex-col bg-white font-['Liberation_Sans',sans-serif]">
    <div className="flex h-[38px] shrink-0 items-center">
      <AppIcon kind="delphi" size={20} className="ml-[10px]" />
      <span className="ml-[3px] text-[16px] text-[#8c8c8c]" style={sansCjk}>Form1</span>
      <WinControls className="ml-auto mr-[1px]" />
    </div>
    <div className="relative flex-1 bg-[#f0f0f0] [background-image:radial-gradient(circle,#7a7468_0.6px,transparent_0.9px)] [background-position:-4px_-5px] [background-size:10px_10px]">
      <div className="absolute left-[180px] top-[80px] flex h-[25px] w-[151px] items-center border-2 border-t-[#808080] border-l-[#808080] border-r-[#f4f4f4] border-b-[#f4f4f4] bg-white pl-[2px] text-[14px]">
        Edit1
      </div>
      <div className="absolute left-[381px] top-[260px] flex h-[31px] w-[93px] items-center justify-center border-2 border-t-white border-l-white border-r-[#808080] border-b-[#808080] bg-[#f0f0f0] text-[14px]">
        Button1
      </div>
    </div>
  </div>
);

const RedArrow = () => (
  <svg className="pointer-events-none absolute left-0 top-0" width="1920" height="1030" viewBox="0 0 1920 1030">
    <polygon points="172,858 188,842 194,841 1073,450 201,853 197,861" fill="#fb3a3f" />
  </svg>
);

const taskApps = ["explorer", "gear", "chrome", "word", "excel", "ppt", "access", "publisher", "outlook", "qq", "wechat", "qqmusic", "dev", "greenv", "hxd", "wolfram", "matlab", "pdfp", "delphi", "typora"];
const underlined = ["explorer", "chrome", "pdfp", "delphi", "typora"];

const Tray = ({ children }) => <div className="flex w-[30px] items-center justify-center">{children}</div>;

const Taskbar = () => (
  <div className="absolute bottom-0 left-0 flex h-[50px] w-[1920px] items-center bg-gradient-to-r from-[#1a2234] via-[#2c302d] to-[#24282a]">
    <div className="flex w-[60px] items-center justify-center">
      <svg width="22" height="22" viewBox="0 0 22 22">
        <path d="M1 4l8-1.200v7.700H1zM10 2.600L21 1v9.500H10zM1 11.500h8v7.700l-8-1.200zM10 11.500h11V21l-11-1.600z" fill="#fff" />
      </svg>
    </div>
    <div className="flex w-[62px] items-center justify-center">
      <Search size={25} strokeWidth={1.200} className="-scale-x-100 text-white" />
    </div>
    {taskApps.map((a) => (
      <div key={a} className={`relative flex h-[50px] w-[62px] items-center justify-center ${a === "delphi" ? "bg-[#434b5a]" : ""}`}>
        {a === "gear" ? <Settings size={26} strokeWidth={2.500} className="text-white" /> : <AppIcon kind={a} size={30} />}
        {underlined.includes(a) && <span className="absolute bottom-0 left-[5px] right-[5px] h-[3px] bg-[#76b9ed]" />}
        {a === "delphi" && <span className="absolute bottom-0 left-0 right-0 h-[3px] bg-[#76b9ed]" />}
      </div>
    ))}
    <div className="ml-auto flex items-center text-white" style={sansCjk}>
      <Tray><AppIcon kind="qqpink" size={20} /></Tray>
      <Tray>
        <span className="flex h-[20px] w-[20px] items-center justify-center rounded-[4px] bg-[#f05a18]">
          <svg width="14" height="14" viewBox="0 0 14 14">
            <path d="M3 1v12l8-6z" fill="#fff" />
          </svg>
        </span>
      </Tray>
      <Tray>
        <span className="flex h-[20px] w-[20px] items-center justify-center rounded-full border-[4px] border-[#9ac82c] bg-[#f0d020] text-[13px] font-bold leading-none text-[#145a30]">+</span>
      </Tray>
      <Tray>
        <span className="flex h-[20px] w-[20px] items-center justify-center bg-[#1c241c]">
          <svg width="14" height="14" viewBox="0 0 14 14">
            <path d="M1 7c3-5 8-5 12 0-4 5-9 5-12 0z" fill="none" stroke="#76b900" strokeWidth="2.500" />
          </svg>
        </span>
      </Tray>
      <Tray><Volume2 size={20} strokeWidth={1.200} /></Tray>
      <Tray>
        <svg width="22" height="22" viewBox="0 0 22 22" fill="none" stroke="#fff" strokeWidth="1">
          <path d="M2 3h18v13H2zM11 16v4M7 20.500h8" />
          <rect x="1" y="2" width="5" height="7" fill="#222" />
        </svg>
      </Tray>
      <Tray>
        <svg width="16" height="26" viewBox="0 0 16 26" fill="none" stroke="#fff" strokeWidth="1">
          <path d="M4 9h7v13a3.500 3.500 0 0 1-7 0zM5 2h5v7H5zM13 16v8l-3 1" />
        </svg>
      </Tray>
      <Tray>
        <svg width="24" height="20" viewBox="0 0 24 20" fill="none" stroke="#fff" strokeWidth="1.200">
          <rect x="7" y="4" width="16" height="13" />
          <rect x="9" y="6" width="12" height="9" fill="#ddd" />
          <path d="M1 9h6M3 5v8" />
        </svg>
      </Tray>
      <span className="flex w-[32px] justify-center text-[18px]">英</span>
      <span className="ml-[9px] flex h-[25px] w-[20px] items-center justify-center bg-white text-[15px] text-black">拼</span>
      <div className="ml-[7px] flex w-[112px] flex-col items-center text-[15px] leading-[24px]">
        <span>4:53</span>
        <span>2021-12-04</span>
      </div>
      <div className="relative flex w-[62px] pl-[11px]">
        <svg width="22" height="24" viewBox="0 0 22 24">
          <path d="M1 1h20v17h-9l-5 5v-5H1z" fill="#fff" />
          <path d="M5 6h12M5 10h12M5 14h8" stroke="#222" />
        </svg>
        <span className="absolute left-[20px] top-[11px] flex h-[22px] w-[22px] items-center justify-center rounded-full border border-[#aaa] bg-[#333] text-[14px] text-white">1</span>
      </div>
    </div>
  </div>
);

export default function App() {
  return (
    <div className="relative h-[1080px] w-[1920px] overflow-hidden bg-[#011a4c]">
      <Wallpaper />
      <div className="absolute left-[94.500px] top-[107px] grid grid-cols-[repeat(19,94.900px)] grid-rows-[repeat(9,100px)]">
        {desktopIcons.map((d) => (
          <DesktopIcon key={d.pos} {...d} />
        ))}
      </div>
      <MainWindow />
      <ObjectTree />
      <ObjectInspector />
      <FormWindow />
      <RedArrow />
      <Taskbar />
    </div>
  );
}
